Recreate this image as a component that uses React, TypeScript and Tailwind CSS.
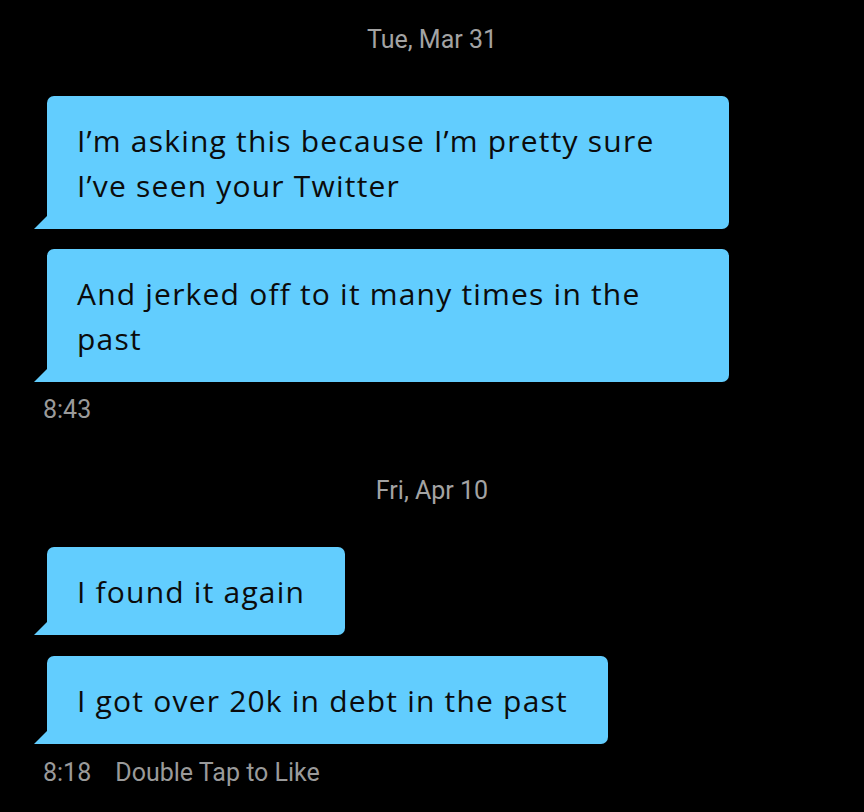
const Tail: React.FC = () => (
  <svg className="absolute -left-[13px] bottom-0" width="13" height="13" viewBox="0 0 13 13">
    <polygon points="0,13 13,13 13,0" fill="#62cdfe" />
  </svg>
);

const Bubble: React.FC<{ text: string }> = ({ text }) => (
  <div className="relative inline-block max-w-[682px] rounded-[7px] rounded-bl-none bg-[#62cdfe] pt-[22px] pb-[21px] pl-[30px] pr-[40px] text-[30px] font-medium leading-[45px] tracking-[1.2px] text-[#0b0b0b]" style={{ fontFamily: '"Open Sans", "Noto Sans", sans-serif' }}>
    {text}
    <Tail />
  </div>
);

const DateHeader: React.FC<{ label: string; className?: string }> = ({ label, className }) => (
  <div className={"text-center text-[25px] leading-[28px] text-[#a3a3a3] " + (className ?? "")}>{label}</div>
);

export default function App() {
  return (
    <div className="h-[812px] w-full overflow-hidden bg-black pt-[26px] font-['Roboto',sans-serif]">
      <DateHeader label="Tue, Mar 31" />

      <div className="mt-[42px] flex flex-col items-start gap-[20px] pl-[47px]">
        <Bubble text="I’m asking this because I’m pretty sure I’ve seen your Twitter" />
        <Bubble text="And jerked off to it many times in the past" />
      </div>
      <div className="mt-[14px] pl-[43px] text-[25px] leading-[28px] text-[#9a9a9a]">8:43</div>

      <DateHeader label="Fri, Apr 10" className="mt-[53px]" />

      <div className="mt-[42px] flex flex-col items-start gap-[21px] pl-[47px]">
        <Bubble text="I found it again" />
        <Bubble text="I got over 20k in debt in the past" />
      </div>
      <div className="mt-[15px] flex gap-[24px] pl-[43px] text-[25px] leading-[28px] text-[#9a9a9a]">
        <span>8:18</span>
        <span>Double Tap to Like</span>
      </div>
    </div>
  );
}
